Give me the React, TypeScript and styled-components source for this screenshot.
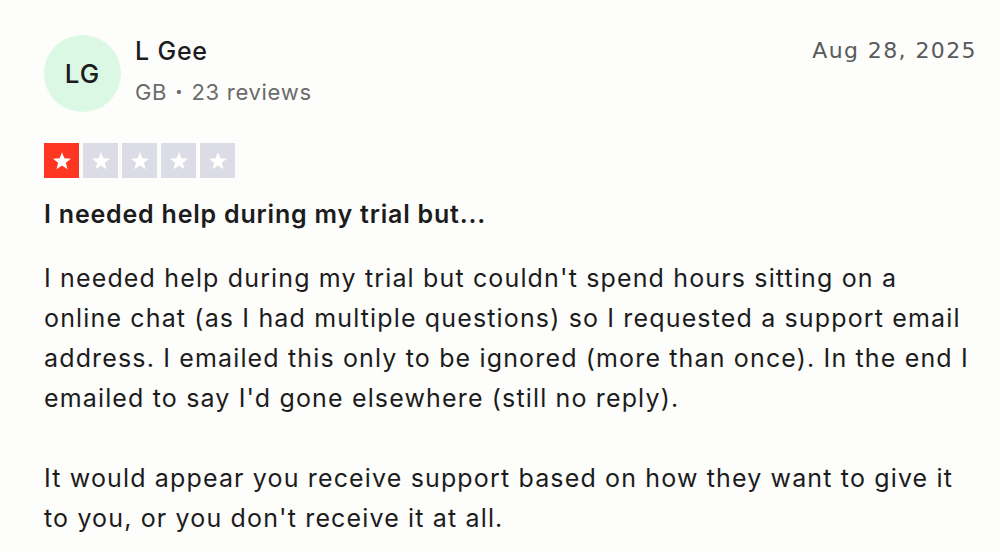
import React from "react";
import styled, { createGlobalStyle } from "styled-components";

const Global = createGlobalStyle`
  html, body { margin: 0; padding: 0; background: #fdfdfb; }
  body { font-family: Inter, "Noto Sans", sans-serif; color: #1c1c1c; }
  * { box-sizing: border-box; }
`;

const Card = styled.article`
  width: 1000px;
  height: 552px;
  overflow: hidden;
  padding: 35px 24px 0 44px;
  background: #fdfdfb;
`;

const Header = styled.header`
  display: flex;
  align-items: flex-start;
`;

const Avatar = styled.div`
  width: 77px;
  height: 77px;
  border-radius: 50%;
  background: #dbf8e4;
  display: flex;
  align-items: center;
  justify-content: center;
  font-size: 26px;
  font-weight: 500;
  letter-spacing: 1px;
  color: #1c1c1c;
  flex-shrink: 0;
`;

const Info = styled.div`
  margin-left: 14px;
  display: flex;
  flex-direction: column;
  flex: 1;
`;

const Name = styled.div`
  font-size: 25px;
  font-weight: 500;
  line-height: 32px;
  letter-spacing: 0.8px;
`;

const Meta = styled.div`
  font-size: 22px;
  color: #6b6b6b;
  line-height: 30px;
  margin-top: 10px;
  letter-spacing: 0.7px;
`;

const Dot = styled.span`
  font-weight: 800;
  margin: 0 1px;
`;

const DateText = styled.time`
  font-family: "DejaVu Sans", Verdana, sans-serif;
  font-size: 22px;
  color: #5a5a5a;
  line-height: 30px;
  margin-top: 1px;
  letter-spacing: 1.4px;
  margin-right: -1px;
`;

const Stars = styled.div`
  display: flex;
  gap: 4px;
  margin-top: 31px;
`;

const StarBox = styled.div<{ $on: boolean }>`
  width: 35px;
  height: 35px;
  background: ${(p) => (p.$on ? "#ff3722" : "#dcdce6")};
  display: flex;
  align-items: center;
  justify-content: center;
`;

const Title = styled.h2`
  margin: 18px 0 0;
  font-size: 25px;
  font-weight: 600;
  line-height: 36px;
  letter-spacing: 0.8px;
`;

const Body = styled.p`
  margin: 26px 0 0;
  font-size: 25px;
  line-height: 40px;
  letter-spacing: 1.15px;
  white-space: pre-line;
  color: #1c1c1c;
`;

const Star = () => (
  <svg width="22" height="22" viewBox="0 0 24 24">
    <path
      d="M12 2.5l2.6 6.6 7.1.4-5.5 4.5 1.8 6.9L12 17l-6 3.9 1.8-6.9-5.5-4.5 7.1-.4z"
      fill="#ffffff"
    />
  </svg>
);

export default function App() {
  return (
    <>
      <Global />
      <Card>
        <Header>
          <Avatar>LG</Avatar>
          <Info>
            <Name>L Gee</Name>
            <Meta>
              GB <Dot>·</Dot> 23 reviews
            </Meta>
          </Info>
          <DateText>Aug 28, 2025</DateText>
        </Header>
        <Stars>
          {[0, 1, 2, 3, 4].map((i) => (
            <StarBox key={i} $on={i === 0}>
              <Star />
            </StarBox>
          ))}
        </Stars>
        <Title>I needed help during my trial but...</Title>
        <Body>
          {"I needed help during my trial but couldn't spend hours sitting on a online chat (as I had multiple questions) so I requested a support email address. I emailed this only to be ignored (more than once). In the end I emailed to say I'd gone elsewhere (still no reply).\n\nIt would appear you receive support based on how they want to give it to you, or you don't receive it at all."}
        </Body>
      </Card>
    </>
  );
}
